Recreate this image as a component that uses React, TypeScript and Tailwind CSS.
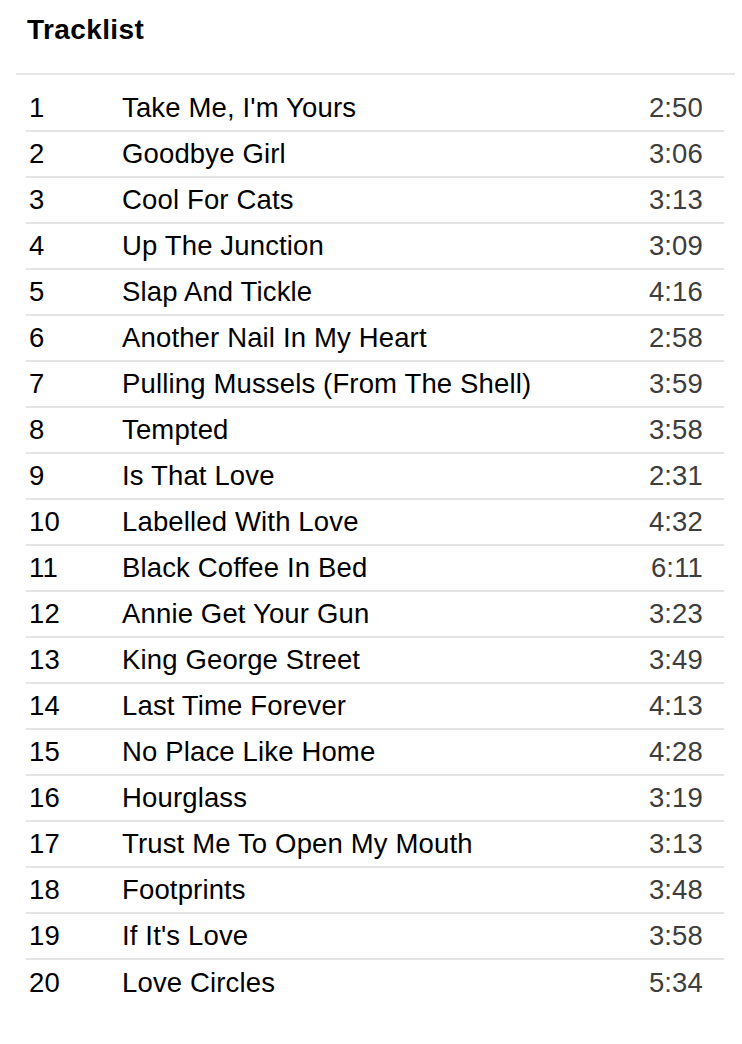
const tracks: [string, string][] = [
  ["Take Me, I'm Yours", "2:50"],
  ["Goodbye Girl", "3:06"],
  ["Cool For Cats", "3:13"],
  ["Up The Junction", "3:09"],
  ["Slap And Tickle", "4:16"],
  ["Another Nail In My Heart", "2:58"],
  ["Pulling Mussels (From The Shell)", "3:59"],
  ["Tempted", "3:58"],
  ["Is That Love", "2:31"],
  ["Labelled With Love", "4:32"],
  ["Black Coffee In Bed", "6:11"],
  ["Annie Get Your Gun", "3:23"],
  ["King George Street", "3:49"],
  ["Last Time Forever", "4:13"],
  ["No Place Like Home", "4:28"],
  ["Hourglass", "3:19"],
  ["Trust Me To Open My Mouth", "3:13"],
  ["Footprints", "3:48"],
  ["If It's Love", "3:58"],
  ["Love Circles", "5:34"],
]

export default function App() {
  return (
    <div className="min-h-[1044px] w-[742px] bg-white text-black font-['Liberation_Sans',Arial,sans-serif]">
      <header className="pl-[27px] pt-[12px] h-[73px]">
        <h1 className="text-[28px] font-bold leading-[36px] tracking-[0.4px]">Tracklist</h1>
      </header>
      <div className="ml-[16px] mr-[7px] h-[2px] bg-[#e6e6e6]" />

      <ol className="mt-[11px] ml-[26px] mr-[18px]">
        {tracks.map(([title, time], i) => (
          <li
            key={i}
            className={
              "flex items-center h-[46px] text-[27.5px] leading-none tracking-[0.15px] " +
              (i < tracks.length - 1 ? "border-b-2 border-[#e4e4e4]" : "")
            }
          >
            <span className="w-[96px] pl-[3px]">{i + 1}</span>
            <span className="flex-1">{title}</span>
            <span className="pr-[21px] text-[#3d3d3d]">{time}</span>
          </li>
        ))}
      </ol>
    </div>
  )
}
